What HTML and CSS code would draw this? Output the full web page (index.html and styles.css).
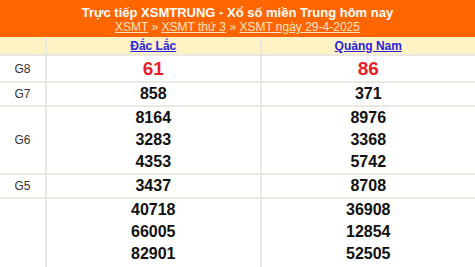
FILE: index.html
```html
<!DOCTYPE html>
<html lang="vi">
<head>
<meta charset="utf-8">
<link rel="stylesheet" href="styles.css">
</head>
<body>
<div class="header">
  <h1 class="title">Trực tiếp XSMTRUNG - Xổ số miền Trung hôm nay</h1>
  <div class="crumbs"><a href="#">XSMT</a> » <a href="#">XSMT thứ 3</a> » <a href="#">XSMT ngày 29-4-2025</a></div>
</div>
<table class="results">
  <tr class="head">
    <th class="lbl"></th>
    <th><a href="#">Đắc Lắc</a></th>
    <th><a href="#">Quảng Nam</a></th>
  </tr>
  <tr class="g8">
    <td class="lbl">G8</td>
    <td><div class="n big">61</div></td>
    <td><div class="n big">86</div></td>
  </tr>
  <tr>
    <td class="lbl">G7</td>
    <td><div class="n">858</div></td>
    <td><div class="n">371</div></td>
  </tr>
  <tr>
    <td class="lbl">G6</td>
    <td><div class="n">8164</div><div class="n">3283</div><div class="n">4353</div></td>
    <td><div class="n">8976</div><div class="n">3368</div><div class="n">5742</div></td>
  </tr>
  <tr>
    <td class="lbl">G5</td>
    <td><div class="n">3437</div></td>
    <td><div class="n">8708</div></td>
  </tr>
  <tr>
    <td class="lbl">G4</td>
    <td><div class="n">40718</div><div class="n">66005</div><div class="n">82901</div><div class="n">93157</div><div class="n">21846</div><div class="n">07392</div><div class="n">58614</div></td>
    <td><div class="n">36908</div><div class="n">12854</div><div class="n">52505</div><div class="n">74120</div><div class="n">68391</div><div class="n">40577</div><div class="n">19263</div></td>
  </tr>
</table>
</body>
</html>
```
FILE: styles.css
```css
html, body { margin: 0; padding: 0; background: #fff; }
body { font-family: "Liberation Sans", Arial, sans-serif; width: 475px; height: 267px; overflow: hidden; }
.header {
  background: #ff6600;
  height: 37px;
  text-align: center;
  color: #fff;
  box-sizing: border-box;
  padding-top: 5px;
}
.title { margin: 0; font-size: 13px; font-weight: bold; line-height: 15px; }
.crumbs { font-size: 12px; line-height: 14px; color: #ffe4c4; }
.crumbs a { color: #ffe4c4; text-decoration: underline; }
.results {
  width: 475px;
  border-collapse: collapse;
  table-layout: fixed;
}
.results th, .results td {
  border: 2px solid #ebe7e2;
  padding: 0;
  text-align: center;
  vertical-align: middle;
}
.results tr:first-child th { border-top: 0; }
.results th:first-child, .results td:first-child { border-left: 0; }
.results th:last-child, .results td:last-child { border-right: 0; }
.results .lbl { width: 45px; font-size: 12px; color: #333; font-weight: normal; }
.head th { background: #fff2c4; height: 17px; font-size: 12px; font-weight: bold; }
.head a { color: #2c1ee0; text-decoration: underline; }
.n { font-size: 16px; font-weight: bold; line-height: 22px; color: #111; }
.g8 td { height: 25px; }
.n.big { font-size: 19px; color: #e8202a; line-height: 25px; }
```
